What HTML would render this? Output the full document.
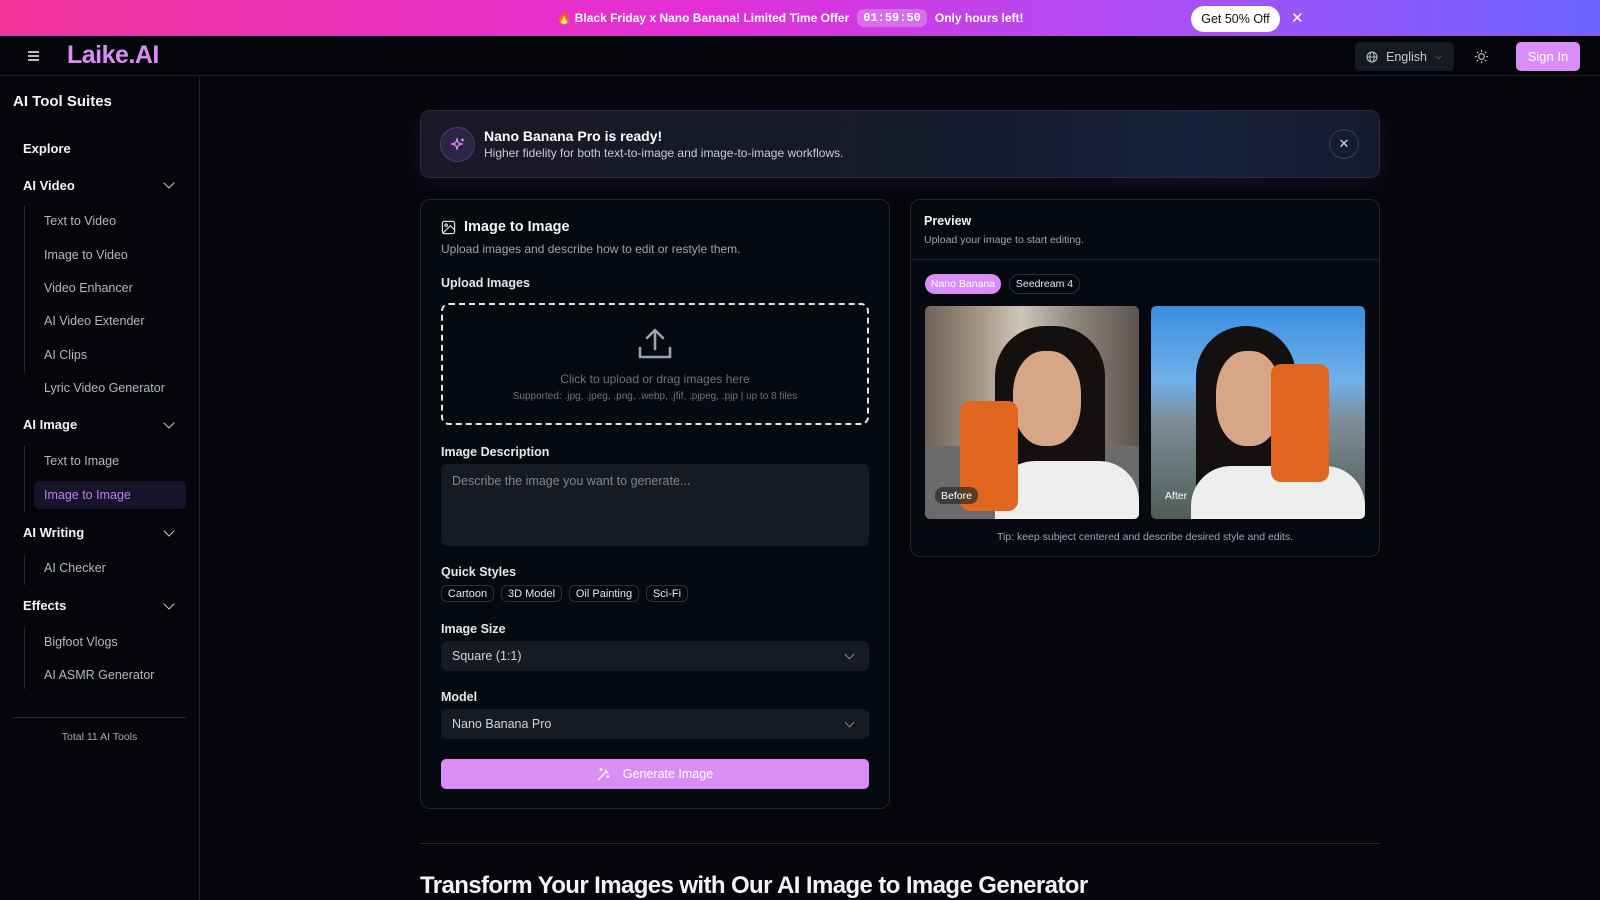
<!DOCTYPE html>
<html><head><meta charset="utf-8"><style>
*{box-sizing:border-box;margin:0;padding:0}
body{width:1600px;height:900px;overflow:hidden;background:#05060b;font-family:"Liberation Sans",sans-serif;color:#e5e7eb;position:relative}
.a{position:absolute}
.promo{left:0;top:0;width:1600px;height:36px;background:linear-gradient(90deg,#f2359a 0%,#e22fd8 45%,#b04df5 70%,#6b63ff 100%);border-bottom:1px solid #c04bd0}
.nav{left:0;top:36px;width:1600px;height:40px;border-bottom:1px solid #1f2129;background:#04050a}
.side{left:0;top:77px;width:200px;height:823px;border-right:1px solid #1f2129}
.sh{font-weight:bold;font-size:13px;color:#f3f4f6;left:23px}
.si{font-size:12.5px;color:#b3b7c0;left:44px}
.vl{left:24px;width:1px;background:#262833}
.chev{width:8px;height:8px;border-right:1.5px solid #ccc;border-bottom:1.5px solid #ccc;transform:rotate(45deg);left:165px}
.card{border:1px solid #23262f;border-radius:10px;background:#070911}
.lbl{font-size:12.5px;color:#e5e7eb;font-weight:bold}
.inp{background:#161a23;border-radius:6px;color:#d1d5db;font-size:12.5px;padding-left:11px;display:flex;align-items:center}
.chip{border:1px solid #2d303a;border-radius:6px;font-size:11px;color:#e5e7eb;height:17px;top:585px;display:flex;align-items:center;justify-content:center}
.dd{width:7px;height:7px;border-right:1.2px solid #888;border-bottom:1.2px solid #888;transform:rotate(45deg);position:absolute;right:16px;top:10px}
</style></head><body>
<div class="a promo"></div>
<div class="a" style="left:0;top:0;width:1600px;height:36px;display:flex;align-items:center;justify-content:center;font-size:12px;font-weight:bold;color:#fff;padding-right:10px">
<span style="margin-left:-10px">🔥 Black Friday x Nano Banana! Limited Time Offer</span>
<span style="font-family:'Liberation Mono',monospace;background:rgba(255,255,255,.25);border-radius:7px;padding:2px 6px;margin:0 8px;font-size:12px">01:59:50</span>
<span>Only hours left!</span></div>
<div class="a" style="left:1191px;top:6px;width:89px;height:26px;background:#fff;border-radius:13px;color:#111;font-size:12.5px;display:flex;align-items:center;justify-content:center">Get 50% Off</div>
<div class="a" style="left:1291px;top:9px;color:#fff;font-size:15px">✕</div>

<div class="a nav"></div>
<div class="a" style="left:28px;top:51px;width:11px;height:2px;background:#bbb;box-shadow:0 4px 0 #bbb,0 8px 0 #bbb"></div>
<div class="a" style="left:67px;top:41px;font-size:25px;font-weight:bold;color:#d98ef7;letter-spacing:-0.5px">Laike.AI</div>
<div class="a" style="left:1355px;top:42px;width:99px;height:29px;background:#161a22;border-radius:5px;font-size:12.5px;color:#c5c8ce;display:flex;align-items:center;padding-left:11px">
<svg width="12" height="12" viewBox="0 0 12 12" style="margin-right:8px"><circle cx="6" cy="6" r="5" fill="none" stroke="#bbb" stroke-width="1.1"/><ellipse cx="6" cy="6" rx="2.2" ry="5" fill="none" stroke="#bbb" stroke-width="1"/><path d="M1 6h10" stroke="#bbb"/></svg>English<span style="margin-left:8px;font-size:9px;color:#999">⌵</span></div>
<svg class="a" style="left:1474px;top:49px" width="15" height="15" viewBox="0 0 16 16" fill="none" stroke="#ccc" stroke-width="1.2"><circle cx="8" cy="8" r="3"/><path d="M8 1v2M8 13v2M1 8h2M13 8h2M3 3l1.4 1.4M11.6 11.6L13 13M3 13l1.4-1.4M11.6 4.4L13 3"/></svg>
<div class="a" style="left:1516px;top:42px;width:64px;height:29px;background:#d98ef7;border-radius:5px;font-size:13px;color:#fff;display:flex;align-items:center;justify-content:center">Sign In</div>

<div class="a side"></div>
<div class="a" style="left:13px;top:93px;font-size:15px;font-weight:bold;color:#f3f4f6">AI Tool Suites</div>
<div class="a sh" style="top:141px">Explore</div>
<div class="a sh" style="top:178px">AI Video</div><div class="a chev" style="top:179px"></div>
<div class="a vl" style="top:206px;height:166px"></div>
<div class="a si" style="top:214px">Text to Video</div>
<div class="a si" style="top:248px">Image to Video</div>
<div class="a si" style="top:281px">Video Enhancer</div>
<div class="a si" style="top:314px">AI Video Extender</div>
<div class="a si" style="top:348px">AI Clips</div>
<div class="a si" style="top:381px">Lyric Video Generator</div>
<div class="a sh" style="top:417px">AI Image</div><div class="a chev" style="top:419px"></div>
<div class="a vl" style="top:446px;height:66px"></div>
<div class="a si" style="top:454px">Text to Image</div>
<div class="a" style="left:34px;top:481px;width:152px;height:28px;background:#16132a;border-radius:6px"></div>
<div class="a si" style="top:488px;color:#c77df0">Image to Image</div>
<div class="a sh" style="top:525px">AI Writing</div><div class="a chev" style="top:527px"></div>
<div class="a vl" style="top:555px;height:30px"></div>
<div class="a si" style="top:561px">AI Checker</div>
<div class="a sh" style="top:598px">Effects</div><div class="a chev" style="top:600px"></div>
<div class="a vl" style="top:627px;height:62px"></div>
<div class="a si" style="top:635px">Bigfoot Vlogs</div>
<div class="a si" style="top:668px">AI ASMR Generator</div>
<div class="a" style="left:13px;top:717px;width:173px;height:1px;background:#262833"></div>
<div class="a" style="left:13px;top:731px;width:173px;text-align:center;font-size:10.5px;color:#aaa">Total 11 AI Tools</div>

<div class="a" style="left:420px;top:110px;width:960px;height:68px;border:1px solid #272c3d;border-radius:10px;background:linear-gradient(90deg,#1a1826 0%,#141a2c 60%,#17223c 80%,#131a2d 100%);box-shadow:0 6px 20px rgba(80,30,110,.25)"></div>
<div class="a" style="left:440px;top:127px;width:35px;height:35px;border-radius:50%;background:#2c2445;border:1px solid #4b3a6e;display:flex;align-items:center;justify-content:center">
<svg width="16" height="16" viewBox="0 0 16 16" fill="none" stroke="#d98ef7" stroke-width="1.3"><path d="M7 2l1.3 3.7L12 7l-3.7 1.3L7 12 5.7 8.3 2 7l3.7-1.3z"/><path d="M12.5 1.5v3M11 3h3"/></svg></div>
<div class="a" style="left:484px;top:128px;font-size:14px;font-weight:bold;color:#fff">Nano Banana Pro is ready!</div>
<div class="a" style="left:484px;top:146px;font-size:12px;color:#c9ccd4">Higher fidelity for both text-to-image and image-to-image workflows.</div>
<div class="a" style="left:1329px;top:129px;width:30px;height:30px;border-radius:50%;border:1px solid #3a4052;color:#ddd;font-size:13px;display:flex;align-items:center;justify-content:center">✕</div>

<div class="a card" style="left:420px;top:199px;width:470px;height:610px"></div>
<svg class="a" style="left:441px;top:220px" width="15" height="15" viewBox="0 0 16 16" fill="none" stroke="#ddd" stroke-width="1.3"><rect x="1.5" y="1.5" width="13" height="13" rx="2"/><circle cx="5.5" cy="5.5" r="1.3"/><path d="M14 10l-4-4-8 8"/></svg>
<div class="a" style="left:464px;top:219px;font-size:14.5px;font-weight:bold;color:#f3f4f6">Image to Image</div>
<div class="a" style="left:441px;top:242px;font-size:12px;color:#a0a4ad">Upload images and describe how to edit or restyle them.</div>
<div class="a lbl" style="left:441px;top:276px">Upload Images</div>
<div class="a" style="left:441px;top:303px;width:428px;height:122px;border:2px dashed #e5e7eb;border-radius:8px"></div>
<svg class="a" style="left:638px;top:327px" width="34" height="34" viewBox="0 0 34 34" fill="none" stroke="#9ca3af" stroke-width="2.6" stroke-linecap="round" stroke-linejoin="round"><path d="M17 22V4M9 11l8-8 8 8"/><path d="M2 21v9h30v-9"/></svg>
<div class="a" style="left:441px;top:372px;width:428px;text-align:center;font-size:12px;color:#6b7280">Click to upload or drag images here</div>
<div class="a" style="left:441px;top:391px;width:428px;text-align:center;font-size:10px;color:#6b7280">Supported: .jpg, .jpeg, .png, .webp, .jfif, .pjpeg, .pjp | up to 8 files</div>
<div class="a lbl" style="left:441px;top:445px">Image Description</div>
<div class="a" style="left:441px;top:464px;width:428px;height:82px;background:#161a23;border-radius:6px;font-size:12.5px;color:#808590;padding:10px 11px">Describe the image you want to generate...</div>
<div class="a lbl" style="left:441px;top:565px">Quick Styles</div>
<div class="a chip" style="left:441px;width:53px">Cartoon</div>
<div class="a chip" style="left:501px;width:61px">3D Model</div>
<div class="a chip" style="left:569px;width:70px">Oil Painting</div>
<div class="a chip" style="left:646px;width:42px">Sci-Fi</div>
<div class="a lbl" style="left:441px;top:622px">Image Size</div>
<div class="a inp" style="left:441px;top:641px;width:428px;height:30px">Square (1:1)<span class="dd"></span></div>
<div class="a lbl" style="left:441px;top:690px">Model</div>
<div class="a inp" style="left:441px;top:709px;width:428px;height:30px">Nano Banana Pro<span class="dd"></span></div>
<div class="a" style="left:441px;top:759px;width:428px;height:30px;background:#d98ef7;border-radius:5px;display:flex;align-items:center;justify-content:center;color:#fff;font-size:12.5px">
<svg width="14" height="14" viewBox="0 0 14 14" fill="none" stroke="#fff" stroke-width="1.3" style="margin-right:12px"><path d="M1 13l8-8M8 3l3 3"/><path d="M4 1v3M2.5 2.5h3M11 8v3M9.5 9.5h3"/></svg>Generate Image</div>

<div class="a card" style="left:910px;top:199px;width:470px;height:358px"></div>
<div class="a" style="left:924px;top:214px;font-size:12.5px;font-weight:bold;color:#f3f4f6">Preview</div>
<div class="a" style="left:924px;top:234px;font-size:10.5px;color:#a0a4ad">Upload your image to start editing.</div>
<div class="a" style="left:911px;top:259px;width:468px;height:1px;background:#23262f"></div>
<div class="a" style="left:925px;top:274px;width:76px;height:20px;border-radius:10px;background:#d98ef7;color:#fff;font-size:10.5px;display:flex;align-items:center;justify-content:center">Nano Banana</div>
<div class="a" style="left:1009px;top:274px;width:71px;height:20px;border-radius:10px;border:1px solid #2d303a;color:#e5e7eb;font-size:10.5px;display:flex;align-items:center;justify-content:center">Seedream 4</div>
<div class="a" style="left:925px;top:306px;width:214px;height:213px;border-radius:5px;overflow:hidden;background:linear-gradient(90deg,#6d625a 0%,#a49585 25%,#cfc6bb 45%,#8f857a 70%,#5c5450 100%)">
<div class="a" style="left:0;top:140px;width:214px;height:73px;background:#6b6b6e"></div>
<div class="a" style="left:70px;top:20px;width:110px;height:200px;border-radius:50px 50px 0 0;background:#141010"></div>
<div class="a" style="left:88px;top:45px;width:68px;height:95px;border-radius:45%;background:#d7a687"></div>
<div class="a" style="left:70px;top:155px;width:144px;height:70px;border-radius:40px 40px 0 0;background:#eeeeec"></div>
<div class="a" style="left:35px;top:95px;width:58px;height:110px;border-radius:10px;background:#e0661f"></div>
<div class="a" style="left:10px;top:181px;width:43px;height:17px;border-radius:8px;background:rgba(40,40,40,.7);color:#fff;font-size:10.5px;display:flex;align-items:center;justify-content:center">Before</div>
</div>
<div class="a" style="left:1151px;top:306px;width:214px;height:213px;border-radius:5px;overflow:hidden;background:linear-gradient(180deg,#3a8ee0 0%,#6fb1ea 35%,#7d8c95 55%,#4f5c58 100%)">
<div class="a" style="left:45px;top:20px;width:100px;height:200px;border-radius:50px 50px 0 0;background:#141010"></div>
<div class="a" style="left:65px;top:45px;width:65px;height:95px;border-radius:45%;background:#d7a687"></div>
<div class="a" style="left:40px;top:160px;width:174px;height:60px;border-radius:40px 40px 0 0;background:#eeeeec"></div>
<div class="a" style="left:120px;top:58px;width:58px;height:118px;border-radius:10px;background:#e0661f"></div>
<div class="a" style="left:8px;top:181px;width:34px;height:17px;color:#fff;font-size:10.5px;display:flex;align-items:center;justify-content:center">After</div>
</div>
<div class="a" style="left:910px;top:531px;width:470px;text-align:center;font-size:10.5px;color:#a0a4ad">Tip: keep subject centered and describe desired style and edits.</div>

<div class="a" style="left:420px;top:843px;width:960px;height:1px;background:#23262f"></div>
<div class="a" style="left:420px;top:872px;font-size:24px;font-weight:bold;color:#f3f4f6;letter-spacing:-0.6px">Transform Your Images with Our AI Image to Image Generator</div>
</body></html>
